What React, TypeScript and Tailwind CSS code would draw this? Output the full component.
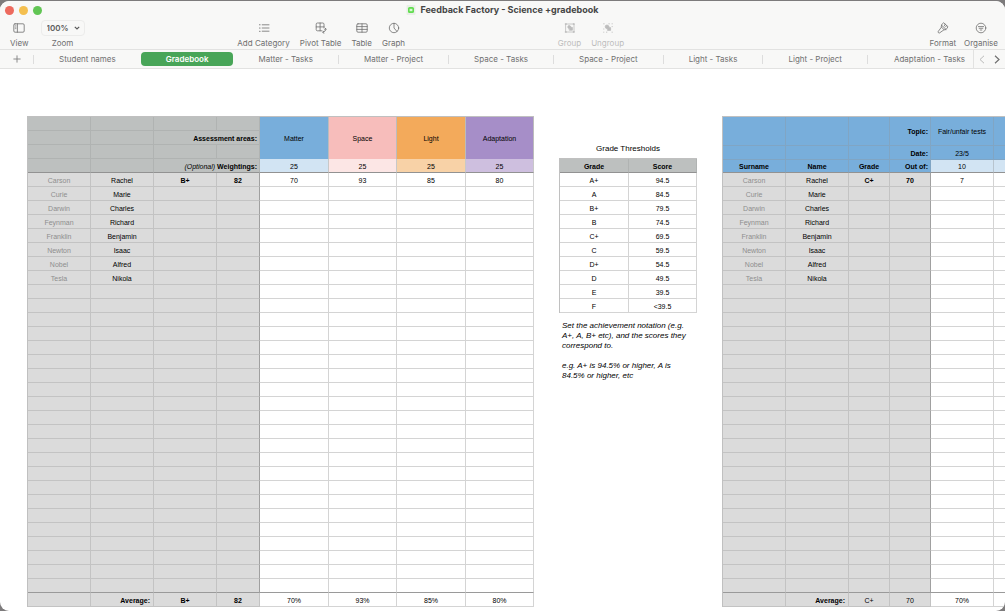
import React from "react";

const LINE = "border-[#d4d4d4]";
const GRAY_LINE = "border-[#c3c3c3]";

const students = [
  ["Carson", "Rachel"],
  ["Curie", "Marie"],
  ["Darwin", "Charles"],
  ["Feynman", "Richard"],
  ["Franklin", "Benjamin"],
  ["Newton", "Isaac"],
  ["Nobel", "Alfred"],
  ["Tesla", "Nikola"],
];

const rows = Array.from({ length: 30 }, (_, i) => students[i] ?? ["", ""]);

const areas = [
  { name: "Matter", weight: 25, score: 70, head: "bg-[#78aedb]", sub: "bg-[#d2e4f3]" },
  { name: "Space", weight: 25, score: 93, head: "bg-[#f7bdbb]", sub: "bg-[#fce6e5]" },
  { name: "Light", weight: 25, score: 85, head: "bg-[#f3aa5b]", sub: "bg-[#f8d2a7]" },
  { name: "Adaptation", weight: 25, score: 80, head: "bg-[#a68ec8]", sub: "bg-[#cebfdf]" },
];

const thresholds = [
  ["A+", "94.5"],
  ["A", "84.5"],
  ["B+", "79.5"],
  ["B", "74.5"],
  ["C+", "69.5"],
  ["C", "59.5"],
  ["D+", "54.5"],
  ["D", "49.5"],
  ["E", "39.5"],
  ["F", "<39.5"],
];

const tabs = [
  "Student names",
  "Gradebook",
  "Matter - Tasks",
  "Matter - Project",
  "Space - Tasks",
  "Space - Project",
  "Light - Tasks",
  "Light - Project",
  "Adaptation - Tasks",
];

type IconProps = { children: React.ReactNode };

const Icon: React.FC<IconProps> = ({ children }) => (
  <svg
    viewBox="0 0 12 12"
    className="w-3 h-3"
    fill="none"
    stroke="currentColor"
    strokeWidth="0.8"
    strokeLinecap="round"
    strokeLinejoin="round"
    aria-hidden="true"
  >
    {children}
  </svg>
);

const SidebarIcon = () => (
  <Icon>
    <rect x="0.8" y="1.8" width="10.4" height="8.4" rx="1.2" />
    <path d="M4.4 1.8v8.4" />
    <path d="M2.2 3.8h.8M2.2 5.2h.8M2.2 6.6h.8" strokeWidth="0.6" />
  </Icon>
);

const ListIcon = () => (
  <Icon>
    <path d="M4.2 2.8h6.8M4.2 6h6.8M4.2 9.2h6.8" />
    <path d="M1.6 2.8h.4M1.6 6h.4M1.6 9.2h.4" strokeWidth="1.1" />
  </Icon>
);

const PivotIcon = () => (
  <Icon>
    <path d="M7 8.8H2.4a1.2 1.2 0 0 1-1.2-1.2V2.2A1.2 1.2 0 0 1 2.4 1h5.4A1.2 1.2 0 0 1 9 2.2V6" />
    <path d="M1.2 4.9H9M5.1 1v7.8" />
    <path d="M10.6 6.6c.3 2-.6 3.4-2.6 3.7M8.8 9.1 7.7 10.3l1.3 1M9.7 7.4l.9-1 1 1" />
  </Icon>
);

const TableIcon = () => (
  <Icon>
    <rect x="0.8" y="1.8" width="10.4" height="8.4" rx="1.2" />
    <path d="M.8 4.6h10.4M.8 7.4h10.4M6 1.8v8.4" />
  </Icon>
);

const GraphIcon = () => (
  <Icon>
    <circle cx="6" cy="6" r="4.7" />
    <path d="M6 1.3V6l3 3.5" />
  </Icon>
);

const GroupIcon = () => (
  <Icon>
    <rect x="2" y="2" width="8" height="8" />
    <path d="M1.6 1.6h.8v.8h-.8zM9.6 1.6h.8v.8h-.8zM1.6 9.6h.8v.8h-.8zM9.6 9.6h.8v.8h-.8z" />
    <circle cx="5.2" cy="5" r="1.4" fill="currentColor" />
    <rect x="5.6" y="5.4" width="2.8" height="2.8" fill="currentColor" />
  </Icon>
);

const UngroupIcon = () => (
  <Icon>
    <path d="M1.6 1.8h.6M6.8 1.8h.6M1.6 7h.3M4.4 10.2h.5M10 4.6h.4M10 10.2h.4M10 1.8h.4M1.6 10.2h.3" />
    <circle cx="5" cy="4.8" r="1.8" fill="currentColor" />
    <rect x="5.8" y="5.6" width="2.8" height="2.8" fill="currentColor" />
  </Icon>
);

const BrushIcon = () => (
  <Icon>
    <path d="M7 1 11 4.8 9 7.6 7.2 7.8 4.2 4.9 4.6 3z" />
    <path d="M4.6 3.2 9 7.4M8.2 2.2 7.4 3.8M9.6 3.6 8.6 4.8" />
    <path d="M4.4 5.2 1.4 9.2a1 1 0 0 0 1.5 1.5L7 7.8" />
  </Icon>
);

const OrganiseIcon = () => (
  <Icon>
    <circle cx="6" cy="6" r="4.8" />
    <path d="M3.4 4.6h5.2M4.2 6.3h3.6M5.2 8h1.6" />
  </Icon>
);

type ToolProps = { label: string; icon: React.ReactNode; disabled?: boolean };

const Tool: React.FC<ToolProps> = ({ label, icon, disabled }) => (
  <button
    type="button"
    disabled={disabled}
    className="flex flex-col items-center text-[#6f6f6f] disabled:text-[#bdbdbd]"
  >
    <span className="flex h-4 items-center">{icon}</span>
    <span className="mt-px text-[8px] leading-3 whitespace-nowrap">{label}</span>
  </button>
);

const TitleBar = () => (
  <div className="relative flex h-[18px] items-center justify-center">
    <div className="absolute left-[5px] flex gap-[5px]">
      <button type="button" aria-label="Close" className="w-[9px] h-[9px] rounded-full bg-[#ed6a5e]" />
      <button type="button" aria-label="Minimise" className="w-[9px] h-[9px] rounded-full bg-[#f4bf4f]" />
      <button type="button" aria-label="Full screen" className="w-[9px] h-[9px] rounded-full bg-[#61c554]" />
    </div>
    <svg viewBox="0 0 10 10" className="mr-1 w-[10px] h-[10px]" aria-hidden="true">
      <rect x="0.5" y="0" width="9" height="10" rx="1" fill="#e9efe7" />
      <rect x="2" y="2" width="6" height="6" rx="1.6" fill="#62dc50" />
      <rect x="3.6" y="3.8" width="2.8" height="2.4" fill="#d8f8d3" />
    </svg>
    <h1 className="text-[9px] leading-3 font-bold text-[#454545]">
      Feedback Factory - Science +gradebook
    </h1>
  </div>
);

const Toolbar = () => (
  <div className="flex items-start border-b border-[#e2e2e1] pt-px pr-[7px] pl-[10px]">
    <div className="flex gap-3">
      <Tool label="View" icon={<SidebarIcon />} />
      <div className="flex flex-col items-center text-[#6f6f6f]">
        <div className="relative">
          <select
            id="zoom"
            defaultValue="100%"
            className="block h-4 w-11 appearance-none rounded border border-[#ececeb] pl-[5px] text-[8px] leading-3 font-semibold text-[#5c5c5c]"
          >
            <option>50%</option>
            <option>100%</option>
            <option>200%</option>
          </select>
          <svg
            viewBox="0 0 6 6"
            className="pointer-events-none absolute top-[5px] right-[5px] w-[6px] h-[6px]"
            fill="none"
            stroke="#5c5c5c"
            strokeWidth="1.2"
            aria-hidden="true"
          >
            <path d="M.8 1.8 3 4l2.2-2.2" />
          </svg>
        </div>
        <label htmlFor="zoom" className="mt-px text-[8px] leading-3">
          Zoom
        </label>
      </div>
    </div>
    <div className="flex-1" />
    <div className="flex gap-[10px]">
      <Tool label="Add Category" icon={<ListIcon />} />
      <Tool label="Pivot Table" icon={<PivotIcon />} />
      <Tool label="Table" icon={<TableIcon />} />
      <Tool label="Graph" icon={<GraphIcon />} />
    </div>
    <div className="flex-1" />
    <div className="flex gap-[10px]">
      <Tool label="Group" icon={<GroupIcon />} disabled />
      <Tool label="Ungroup" icon={<UngroupIcon />} disabled />
    </div>
    <div className="flex-[2]" />
    <div className="flex gap-2">
      <Tool label="Format" icon={<BrushIcon />} />
      <Tool label="Organise" icon={<OrganiseIcon />} />
    </div>
  </div>
);

const SheetTabs = () => (
  <nav className="flex h-[19px] items-center border-b border-[#e2e2e1] text-[8px] leading-[14px] text-[#707070]">
    <button type="button" aria-label="Add sheet" className="flex w-[33px] justify-center">
      <svg viewBox="0 0 8 8" className="w-2 h-2" stroke="#808080" strokeWidth="0.9" aria-hidden="true">
        <path d="M4 .4v7.2M.4 4h7.2" />
      </svg>
    </button>
    <span className="h-[9px] w-px bg-[#dddddd]" />
    {tabs.map((tab, i) => {
      if (tab === "Gradebook") {
        return (
          <button
            key={tab}
            type="button"
            className="h-[14px] flex-auto rounded bg-[#48a558] px-5 font-semibold whitespace-nowrap text-white"
          >
            {tab}
          </button>
        );
      }
      if (i === tabs.length - 1) {
        return (
          <button key={tab} type="button" className="pr-2 pl-[26px] whitespace-nowrap">
            {tab}
          </button>
        );
      }
      return (
        <React.Fragment key={tab}>
          <button type="button" className="flex-auto px-5 whitespace-nowrap">
            {tab}
          </button>
          {i > 0 && <span className="h-[9px] w-px bg-[#dddddd]" />}
        </React.Fragment>
      );
    })}
    <div className="flex h-full w-8 items-center justify-around border-l border-[#e2e2e1]">
      <button type="button" aria-label="Previous sheets">
        <svg viewBox="0 0 6 9" className="w-[6px] h-[9px]" fill="none" stroke="#b9b9b9" aria-hidden="true">
          <path d="M5 .8 1 4.5l4 3.7" />
        </svg>
      </button>
      <button type="button" aria-label="More sheets">
        <svg viewBox="0 0 6 9" className="w-[6px] h-[9px]" fill="none" stroke="#707070" strokeWidth="1.2" aria-hidden="true">
          <path d="M1 .8l4 3.7-4 3.7" />
        </svg>
      </button>
    </div>
  </nav>
);

type CellProps = {
  children?: React.ReactNode;
  className?: string;
  rowSpan?: number;
};

const Cell: React.FC<CellProps> = ({ children, className = "", rowSpan }) => (
  <td rowSpan={rowSpan} className={`h-[14px] border-r border-b p-0 pt-px text-center ${className}`}>
    {children}
  </td>
);

const TABLE =
  "table-fixed shrink-0 border-separate border-spacing-0 border-t border-l border-[#c0c0c0] text-[7px] leading-[9px] text-black";

const HEAD = "bg-[#bdc0bf] border-[#b0b3b2]";
const SIDE = `bg-[#dbdbdb] ${GRAY_LINE}`;
const BLUE = "bg-[#78aedb] border-[#80a5c4]";

// heavier rule under the last body row, above the averages
const lastRule = (i: number) => (i === rows.length - 1 ? "border-b-[#9a9a9a]" : "");

const Gradebook = () => (
  <table className={`${TABLE} w-[507px]`}>
    <colgroup>
      <col className="w-[63px]" />
      <col className="w-[63px]" />
      <col className="w-[63px]" />
      <col className="w-[43px]" />
      <col className="w-[69px]" />
      <col className="w-[68px]" />
      <col className="w-[69px]" />
      <col className="w-[68px]" />
    </colgroup>
    <thead>
      <tr>
        <Cell className={HEAD} />
        <Cell className={HEAD} />
        <Cell className={HEAD} />
        <Cell className={HEAD} />
        {areas.map((a) => (
          <th key={a.name} rowSpan={3} className={`border-r border-[#bcbcbc] p-0 font-normal ${a.head}`}>
            {a.name}
          </th>
        ))}
      </tr>
      <tr>
        <Cell className={HEAD} />
        <Cell className={HEAD} />
        <th colSpan={2} className={`h-[14px] border-r border-b p-0 pt-px pr-[2px] text-right ${HEAD}`}>
          Assessment areas:
        </th>
      </tr>
      <tr>
        <Cell className={HEAD} />
        <Cell className={HEAD} />
        <Cell className={HEAD} />
        <Cell className={HEAD} />
      </tr>
      <tr>
        <Cell className={`${HEAD} border-b-[#929292]`} />
        <Cell className={`${HEAD} border-b-[#929292]`} />
        <th
          colSpan={2}
          className={`h-[14px] border-r border-b p-0 pt-px pr-[2px] text-right ${HEAD} border-b-[#929292]`}
        >
          <i className="font-normal">(Optional)</i> Weightings:
        </th>
        {areas.map((a) => (
          <Cell key={a.name} className={`${a.sub} border-[#c8c8c8] border-b-[#929292]`}>
            {a.weight}
          </Cell>
        ))}
      </tr>
    </thead>
    <tbody>
      {rows.map(([surname, name], i) => (
        <tr key={i}>
          <Cell className={`${SIDE} ${lastRule(i)} text-[#8e8e8e]`}>{surname}</Cell>
          <Cell className={`${SIDE} ${lastRule(i)}`}>{name}</Cell>
          <Cell className={`${SIDE} ${lastRule(i)} font-bold`}>{i === 0 && "B+"}</Cell>
          <Cell className={`${SIDE} ${lastRule(i)} border-r-[#a0a0a0] font-bold`}>{i === 0 && "82"}</Cell>
          {areas.map((a) => (
            <Cell key={a.name} className={`${LINE} ${lastRule(i)}`}>
              {i === 0 && a.score}
            </Cell>
          ))}
        </tr>
      ))}
    </tbody>
    <tfoot>
      <tr>
        <Cell className={SIDE} />
        <th className={`border-r border-b p-0 pt-px pr-[3px] text-right ${SIDE}`}>Average:</th>
        <Cell className={`${SIDE} font-bold`}>B+</Cell>
        <Cell className={`${SIDE} font-bold`}>82</Cell>
        {areas.map((a) => (
          <Cell key={a.name} className={LINE}>
            {a.score}%
          </Cell>
        ))}
      </tr>
    </tfoot>
  </table>
);

const Thresholds = () => (
  <section className="w-[138px] shrink-0 pt-[27px]">
    <h2 className="mb-[3px] text-center text-[8px] leading-3">Grade Thresholds</h2>
    <table className={`${TABLE} w-[138px]`}>
      <colgroup>
        <col className="w-[69px]" />
        <col className="w-[68px]" />
      </colgroup>
      <thead>
        <tr>
          <th className={`h-[14px] border-r border-b p-0 pt-px ${HEAD} border-b-[#929292]`}>Grade</th>
          <th className={`h-[14px] border-r border-b p-0 pt-px ${HEAD} border-b-[#929292]`}>Score</th>
        </tr>
      </thead>
      <tbody>
        {thresholds.map(([grade, score]) => (
          <tr key={grade}>
            <Cell className={LINE}>{grade}</Cell>
            <Cell className={LINE}>{score}</Cell>
          </tr>
        ))}
      </tbody>
    </table>
    <div className="mt-2 space-y-[10px] pr-1 pl-[3px] text-[8px] leading-[10px] italic">
      <p>Set the achievement notation (e.g. A+, A, B+ etc), and the scores they correspond to.</p>
      <p>e.g. A+ is 94.5% or higher, A is 84.5% or higher, etc</p>
    </div>
  </section>
);

const TopicScores = () => (
  <table className={`${TABLE} w-[335px]`}>
    <colgroup>
      <col className="w-[63px]" />
      <col className="w-[63px]" />
      <col className="w-[41px]" />
      <col className="w-[41px]" />
      <col className="w-[63px]" />
      <col className="w-[63px]" />
    </colgroup>
    <thead>
      <tr className="h-[29px]">
        <Cell className={BLUE} />
        <Cell className={BLUE} />
        <Cell className={BLUE} />
        <th className={`border-r border-b p-0 pt-px pr-[2px] text-right ${BLUE}`}>Topic:</th>
        <Cell className={BLUE}>Fair/unfair tests</Cell>
        <Cell className={BLUE} />
      </tr>
      <tr>
        <Cell className={BLUE} />
        <Cell className={BLUE} />
        <Cell className={BLUE} />
        <th className={`border-r border-b p-0 pt-px pr-[2px] text-right ${BLUE}`}>Date:</th>
        <Cell className={BLUE}>23/5</Cell>
        <Cell className={BLUE} />
      </tr>
      <tr>
        <th className={`h-[13px] border-r border-b p-0 pt-px ${BLUE} border-b-[#929292]`}>Surname</th>
        <th className={`border-r border-b p-0 pt-px ${BLUE} border-b-[#929292]`}>Name</th>
        <th className={`border-r border-b p-0 pt-px ${BLUE} border-b-[#929292]`}>Grade</th>
        <th className={`border-r border-b p-0 pt-px pr-[2px] text-right ${BLUE} border-b-[#929292]`}>Out of:</th>
        <td className="border-r border-b border-[#b8c4ce] border-b-[#929292] bg-[#d2e4f3] p-0 pt-px text-center">
          10
        </td>
        <td className="border-r border-b border-[#b8c4ce] border-b-[#929292] bg-[#d2e4f3] p-0" />
      </tr>
    </thead>
    <tbody>
      {rows.map(([surname, name], i) => (
        <tr key={i}>
          <Cell className={`${SIDE} ${lastRule(i)} text-[#8e8e8e]`}>{surname}</Cell>
          <Cell className={`${SIDE} ${lastRule(i)}`}>{name}</Cell>
          <Cell className={`${SIDE} ${lastRule(i)} font-bold`}>{i === 0 && "C+"}</Cell>
          <Cell className={`${SIDE} ${lastRule(i)} border-r-[#a0a0a0] font-bold`}>{i === 0 && "70"}</Cell>
          <Cell className={`${LINE} ${lastRule(i)}`}>{i === 0 && "7"}</Cell>
          <Cell className={`${LINE} ${lastRule(i)}`} />
        </tr>
      ))}
    </tbody>
    <tfoot>
      <tr>
        <Cell className={SIDE} />
        <th className={`border-r border-b p-0 pt-px pr-[3px] text-right ${SIDE}`}>Average:</th>
        <Cell className={SIDE}>C+</Cell>
        <Cell className={SIDE}>70</Cell>
        <Cell className={LINE}>70%</Cell>
        <Cell className={LINE} />
      </tr>
    </tfoot>
  </table>
);

const App: React.FC = () => {
  return (
    <div className="h-screen bg-[#7d7b7c] pt-px">
      <div className="flex h-full flex-col overflow-hidden rounded-[9px] bg-white">
        <header className="bg-[#f8f8f7] font-[Inter,sans-serif]">
          <TitleBar />
          <Toolbar />
          <SheetTabs />
        </header>
        <main className="flex flex-1 items-start gap-[25px] overflow-auto pt-[47px] pl-[27px] font-['Liberation_Sans',Arial,sans-serif] [scrollbar-width:none]">
          <Gradebook />
          <Thresholds />
          <TopicScores />
        </main>
      </div>
    </div>
  );
};

export default App;
